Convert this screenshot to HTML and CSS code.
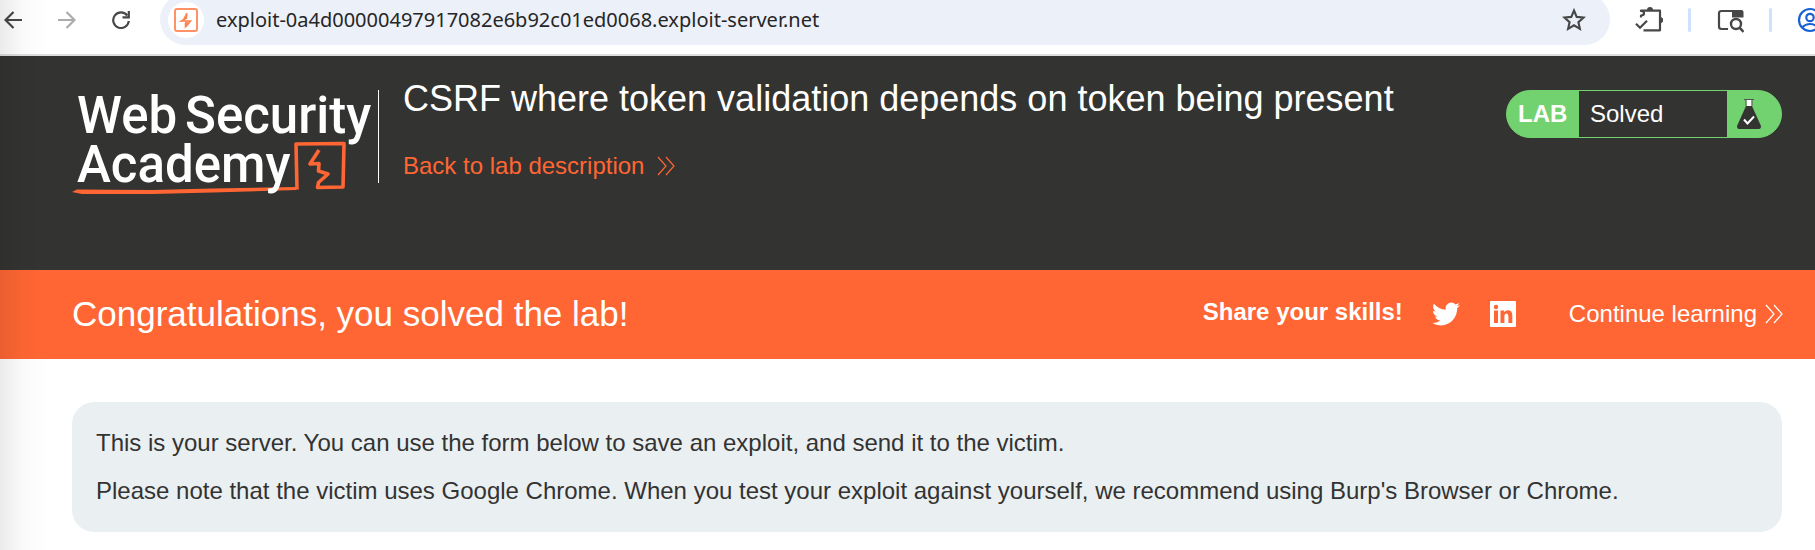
FILE: index.html
```html
<!DOCTYPE html>
<html lang="en">
<head>
<meta charset="utf-8">
<title>Exploit Server: CSRF where token validation depends on token being present</title>
<link rel="stylesheet" href="styles.css">
</head>
<body>
<div class="window">
  <nav class="toolbar" aria-label="Browser">
    <button class="tool nav-tool" aria-label="Back"><svg width="18" height="18" viewBox="0 0 18 18"><path d="M18 9H1.500M9.500 1 1.500 9l8 8" fill="none" stroke="#474747" stroke-width="2.200"/></svg></button>
    <button class="tool nav-tool" aria-label="Forward" disabled><svg width="18" height="18" viewBox="0 0 18 18"><path d="M0 9h16.500M8.500 1l8 8-8 8" fill="none" stroke="#ababab" stroke-width="2.200"/></svg></button>
    <button class="tool nav-tool" aria-label="Reload"><svg width="18" height="18" viewBox="0 0 18 18"><path d="M15.300 4.500A7.800 7.800 0 1 0 16.800 10" fill="none" stroke="#474747" stroke-width="2.200"/><path d="M16.800 0v6.300h-6.300" fill="none" stroke="#474747" stroke-width="2.200"/></svg></button>
    <div class="address">
      <span class="site-icon"><svg width="24" height="24" viewBox="0 0 24 24"><rect x="1" y="1" width="22" height="22" rx="2" fill="none" stroke="#ff9168" stroke-width="2"/><path d="M12.500 5v5L7.500 13H12v2h2.500L11.500 18.500V15M12.500 10h-2L13 5.500M12 13h4.500L12 18.500" fill="none" stroke="#ff8150" stroke-width="1.600"/></svg></span>
      <input class="url" type="text" aria-label="Address" value="exploit-0a4d00000497917082e6b92c01ed0068.exploit-server.net">
      <button class="tool" aria-label="Bookmark"><svg width="24" height="24" viewBox="0 0 24 24"><path d="M12 2.500l2.700 6.400 6.900.6-5.200 4.600 1.500 6.800L12 17.300l-5.900 3.600 1.500-6.800L2.400 9.500l6.900-.6z" fill="none" stroke="#474747" stroke-width="2.100"/></svg></button>
    </div>
    <button class="tool" aria-label="Extensions"><svg width="28" height="28" viewBox="0 0 28 28"><path d="M6 11.500V9.500q3 0 3-2.200T6 5V4.600h19v19.700H8.500" fill="none" stroke="#474747" stroke-width="2.200" stroke-linejoin="round"/><path d="M12 4a3 3 0 0 1 6 0zM25 11a3.200 3.200 0 0 1 0 6.400z" fill="#474747"/><path d="M1 17.800l4 4 7-7" fill="none" stroke="#474747" stroke-width="2.200"/></svg></button>
    <span class="divider"></span>
    <button class="tool" aria-label="Search tabs"><svg width="28" height="28" viewBox="0 0 28 28"><path d="M17 5H5.500Q3 5 3 7.500v13Q3 23 5.500 23H12" fill="none" stroke="#474747" stroke-width="2.200"/><path d="M16 4h9.500q2 0 2 2v5.500H16z" fill="#474747"/><circle cx="20" cy="18" r="5" fill="none" stroke="#474747" stroke-width="2.400"/><path d="M23.500 21.500l4 4.500" stroke="#474747" stroke-width="2.600"/></svg></button>
    <span class="divider"></span>
    <button class="tool profile" aria-label="Profile"><svg width="26" height="26" viewBox="0 0 26 26"><g fill="none" stroke="#1763d6" stroke-width="2.200"><circle cx="13" cy="13" r="11"/><circle cx="13" cy="10.500" r="3.700"/><path d="M5 20.500q3.500-3.500 8-3.500t8 3.500"/></g></svg></button>
  </nav>

  <header class="lab-header">
    <a class="logo" href="#" aria-label="Web Security Academy">
      <svg width="306" height="110" viewBox="0 0 306 110">
        <path d="M0 102l5-2.500 75 .5 60-1.500 84-1.500.5 3-84 2.500-60 1.500H10z" fill="#ff6633"/>
        <path d="M225 99.500L224 54l48-.5-1 43.500-25.500.500 1-5 9.500-8.500-9.500-3 .5-7.500-9 .5 9-14" fill="none" stroke="#ff6633" stroke-width="3.600" stroke-linejoin="round"/>
        <text class="logo-text" x="5" y="43">Web</text>
        <text class="logo-text" x="113" y="43">Security</text>
        <text class="logo-text" x="5" y="92">Academy</text>
      </svg>
    </a>
    <div class="lab-title">
      <h1>CSRF where token validation depends on token being present</h1>
      <a class="back" href="#">Back to lab description
        <svg width="18" height="20" viewBox="0 0 18 20"><path d="M1 1l8 9-8 9M9 1l8 9-8 9" fill="none" stroke="currentColor" stroke-width="1.200"/></svg></a>
    </div>
    <div class="status">
      <span class="status-label">LAB</span>
      <span class="status-value">Solved</span>
      <span class="status-icon"><svg width="24" height="32" viewBox="0 0 24 32"><path d="M9 8h6l9 20q0 3-2 3H2q-2 0-2-3z" fill="#333332"/><path d="M9.500 2h5v6h-5z" fill="#fff"/><path d="M7 1.500h10M9 2v6M15 2v6" fill="none" stroke="#555" stroke-width="1"/><path d="M7 21.500l3.500 4 6.500-7" fill="none" stroke="#fff" stroke-width="2"/></svg></span>
    </div>
  </header>

  <section class="banner">
    <h2>Congratulations, you solved the lab!</h2>
    <strong class="share">Share your skills!</strong>
    <a class="social" href="#" aria-label="Twitter"><svg width="28" height="28" viewBox="0 0 24 24"><path fill="#fff" d="M23.950 4.570a10 10 0 0 1-2.820.770 4.960 4.960 0 0 0 2.160-2.720c-.950.550-2 .950-3.130 1.180a4.920 4.920 0 0 0-8.380 4.480C7.690 8.090 4.070 6.130 1.640 3.160a4.820 4.820 0 0 0-.670 2.480c0 1.710.870 3.210 2.190 4.100a4.900 4.900 0 0 1-2.230-.620v.060a4.920 4.920 0 0 0 3.950 4.830 5 5 0 0 1-2.210.080 4.940 4.940 0 0 0 4.600 3.420A9.870 9.870 0 0 1 0 19.540a13.990 13.990 0 0 0 7.550 2.210c9.050 0 14-7.500 14-13.980 0-.210 0-.420-.020-.630a9.940 9.940 0 0 0 2.460-2.550z"/></svg></a>
    <a class="social" href="#" aria-label="LinkedIn"><svg width="28" height="28" viewBox="0 0 28 28"><rect x="1" y="1" width="26" height="26" rx="1" fill="#fff"/><g fill="#ff6633"><circle cx="7" cy="7" r="2.200"/><path d="M5 10.500h4V23H5zM11.500 10.500h3.700v1.700q1.300-2 3.800-2 4.300 0 4.300 5.300V23h-3.900v-6.700q0-2.800-1.900-2.800-2.100 0-2.100 2.900V23h-3.900z"/></g></svg></a>
    <a class="continue" href="#">Continue learning
      <svg width="18" height="20" viewBox="0 0 18 20"><path d="M1 1l8 9-8 9M9 1l8 9-8 9" fill="none" stroke="currentColor" stroke-width="1.200"/></svg></a>
  </section>

  <main class="content">
    <div class="notice">
      <p>This is your server. You can use the form below to save an exploit, and send it to the victim.</p>
      <p>Please note that the victim uses Google Chrome. When you test your exploit against yourself, we recommend using Burp's Browser or Chrome.</p>
    </div>
  </main>
  <div class="edge-shade"></div>
</div>
</body>
</html>
```

FILE: styles.css
```css
* { box-sizing: border-box; }

body {
  margin: 0;
  background: #fff;
  color: #333332;
  font: 24px/28px "Liberation Sans", Arial, sans-serif;
}

h1, h2, p { margin: 0; }
a { color: inherit; text-decoration: none; }
svg { display: block; flex: none; }

.window {
  position: relative;
  min-height: 100vh;
  overflow: hidden;
}

/* Fades in from the left side of the window */
.edge-shade {
  position: absolute;
  inset: 0 auto 0 0;
  width: 48px;
  background: linear-gradient(to right, rgba(0, 0, 0, 0.08), rgba(0, 0, 0, 0.02) 50%, transparent);
  pointer-events: none;
}

.toolbar {
  display: flex;
  align-items: center;
  gap: 25px;
  height: 56px;
  padding: 0 0 15px 4px;
  border-bottom: 2px solid #dfdedc;
}

.tool {
  flex: none;
  padding: 0;
  border: 0;
  background: none;
}

.nav-tool { margin-right: 11px; }
.nav-tool + .address { margin-left: -6px; }
.profile { margin-right: -8px; }

.address {
  display: flex;
  flex: 1;
  align-items: center;
  gap: 12px;
  height: 51px;
  padding: 0 24px 0 8px;
  border-radius: 26px;
  background: #ecf0f9;
}

.site-icon {
  display: grid;
  flex: none;
  place-items: center;
  width: 36px;
  height: 36px;
  border-radius: 50%;
  background: #fff;
}

.url {
  flex: 1;
  min-width: 0;
  padding: 0;
  border: 0;
  background: none;
  color: #262626;
  font: 20px/28px "Noto Sans", sans-serif;
}

.divider {
  flex: none;
  width: 3px;
  height: 24px;
  border-radius: 2px;
  background: #d0e1fd;
}

.lab-header {
  display: flex;
  align-items: flex-start;
  min-height: 214px;
  padding: 34px 33px 0 72px;
  background: #333332;
  color: #fff;
}

.logo {
  height: 93px;
  border-right: 1px solid #fff;
}

.logo-text {
  fill: #fff;
  font: 500 51px Roboto, sans-serif;
}

.lab-title {
  flex: 1;
  margin-top: -11px;
  padding-left: 24px;
}

h1 {
  font-size: 36px;
  font-weight: 400;
  line-height: 40px;
}

.back {
  display: inline-flex;
  align-items: center;
  gap: 13px;
  margin-top: 33px;
  color: #ff6633;
}

.status {
  display: flex;
  width: 276px;
  height: 48px;
  overflow: hidden;
  border: 1px solid #72d26f;
  border-radius: 24px;
  background: #72d26f;
  line-height: 46px;
}

.status-label {
  width: 72px;
  padding-left: 11px;
  font-weight: 700;
}

.status-value {
  flex: 1;
  padding-left: 11px;
  background: #333332;
}

.status-icon {
  display: flex;
  align-items: center;
  width: 54px;
  padding-left: 10px;
}

.banner {
  display: flex;
  align-items: center;
  min-height: 89px;
  padding: 0 32px 2px 72px;
  background: #ff6633;
  color: #fff;
}

h2 {
  flex: 1;
  font-size: 35px;
  font-weight: 400;
  line-height: 40px;
}

.share { padding-bottom: 4px; }
.social { margin-left: 29px; }

.continue {
  display: flex;
  align-items: center;
  gap: 8px;
  margin-left: 52px;
}

.content { padding: 43px 33px 16px 72px; }

.notice {
  display: grid;
  gap: 20px;
  padding: 27px 24px;
  border-radius: 22px;
  background: #eaeff2;
}
```
